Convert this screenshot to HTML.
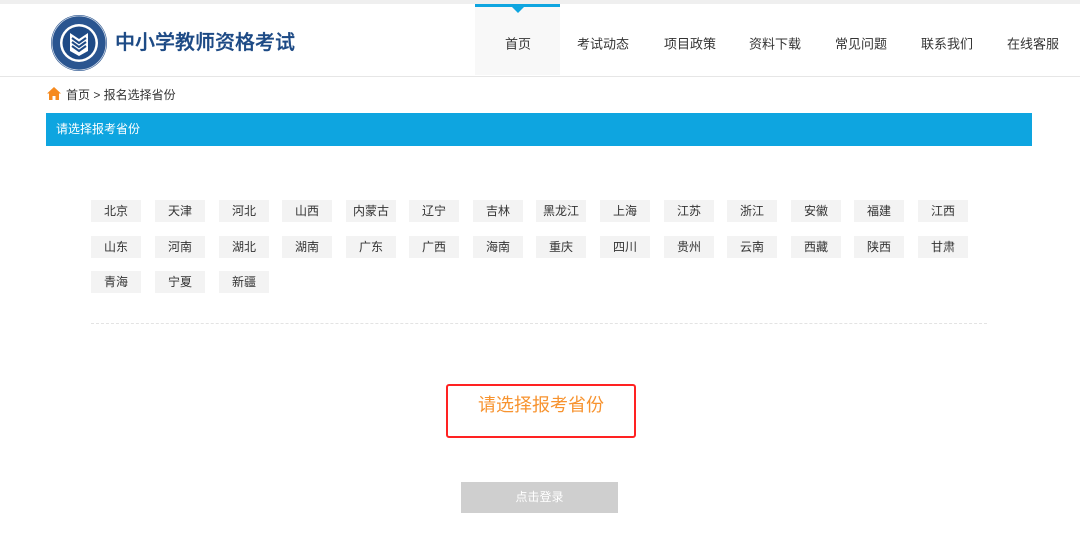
<!DOCTYPE html>
<html><head><meta charset="utf-8"><style>
*{margin:0;padding:0;box-sizing:border-box}
body{width:1080px;height:552px;overflow:hidden;background:#fff;font-family:"Liberation Sans","Noto Sans CJK SC",sans-serif;position:relative;color:#333}
.a{position:absolute}
.nav{position:absolute;top:43px;font-size:13px;color:#333;transform:translate(-50%,-50%);white-space:nowrap}
.p{position:absolute;width:50px;height:22px;background:#f3f3f3;font-size:12px;color:#333;text-align:center;line-height:22px}
</style></head><body>
<div class="a" style="left:0;top:0;width:1080px;height:4px;background:#efefef"></div>
<div class="a" style="left:0;top:76px;width:1080px;height:1px;background:#e6e6e6"></div>
<div class="a" style="left:475px;top:4px;width:85px;height:71px;background:#f8f8f8"></div>
<div class="a" style="left:475px;top:4px;width:85px;height:3px;background:#0ea5e0"></div>
<div class="a" style="left:512px;top:7px;width:0;height:0;border-left:6px solid transparent;border-right:6px solid transparent;border-top:6px solid #0ea5e0"></div>
<svg class="a" style="left:50px;top:14px" width="58" height="58" viewBox="0 0 58 58">
<circle cx="29" cy="29" r="28" fill="#2a5590"/>
<circle cx="29" cy="29" r="27" fill="none" stroke="#cfd8e6" stroke-width="0.8"/>
<circle cx="29" cy="29" r="19" fill="#fff"/>
<circle cx="29" cy="29" r="16.5" fill="#1e4a86"/>
<path d="M20 19 L29 25 L38 19 L38 37 L29 42 L20 37 Z" fill="#fff"/>
<path d="M22 24 L29 29 L36 24 M22 28 L29 33 L36 28 M22 32 L29 37 L36 32" stroke="#1e4a86" stroke-width="2" fill="none"/>
</svg>
<div class="a" style="left:115px;top:30px;font-size:20px;color:#1d4a85;line-height:26px;font-weight:500;-webkit-text-stroke:0.3px #1d4a85">中小学教师资格考试</div>
<div class="nav" style="left:518px">首页</div>
<div class="nav" style="left:603px">考试动态</div>
<div class="nav" style="left:690px">项目政策</div>
<div class="nav" style="left:775px">资料下载</div>
<div class="nav" style="left:861px">常见问题</div>
<div class="nav" style="left:947px">联系我们</div>
<div class="nav" style="left:1033px">在线客服</div>
<svg class="a" style="left:47px;top:87px" width="14" height="13" viewBox="0 0 14 13"><path d="M7 0 L14 6.5 L12 6.5 L12 13 L8.5 13 L8.5 9 L5.5 9 L5.5 13 L2 13 L2 6.5 L0 6.5 Z" fill="#f68a1e"/></svg>
<div class="a" style="left:66px;top:87px;font-size:12px;color:#333;line-height:16px">首页 &gt; 报名选择省份</div>
<div class="a" style="left:46px;top:113px;width:986px;height:33px;background:#0ea5e0;color:#fff;font-size:12px;line-height:33px;padding-left:10px">请选择报考省份</div>
<div class="p" style="left:91px;top:200px">北京</div><div class="p" style="left:155px;top:200px">天津</div><div class="p" style="left:219px;top:200px">河北</div><div class="p" style="left:282px;top:200px">山西</div><div class="p" style="left:346px;top:200px">内蒙古</div><div class="p" style="left:409px;top:200px">辽宁</div><div class="p" style="left:473px;top:200px">吉林</div><div class="p" style="left:536px;top:200px">黑龙江</div><div class="p" style="left:600px;top:200px">上海</div><div class="p" style="left:664px;top:200px">江苏</div><div class="p" style="left:727px;top:200px">浙江</div><div class="p" style="left:791px;top:200px">安徽</div><div class="p" style="left:854px;top:200px">福建</div><div class="p" style="left:918px;top:200px">江西</div>
<div class="p" style="left:91px;top:236px">山东</div><div class="p" style="left:155px;top:236px">河南</div><div class="p" style="left:219px;top:236px">湖北</div><div class="p" style="left:282px;top:236px">湖南</div><div class="p" style="left:346px;top:236px">广东</div><div class="p" style="left:409px;top:236px">广西</div><div class="p" style="left:473px;top:236px">海南</div><div class="p" style="left:536px;top:236px">重庆</div><div class="p" style="left:600px;top:236px">四川</div><div class="p" style="left:664px;top:236px">贵州</div><div class="p" style="left:727px;top:236px">云南</div><div class="p" style="left:791px;top:236px">西藏</div><div class="p" style="left:854px;top:236px">陕西</div><div class="p" style="left:918px;top:236px">甘肃</div>
<div class="p" style="left:91px;top:271px">青海</div><div class="p" style="left:155px;top:271px">宁夏</div><div class="p" style="left:219px;top:271px">新疆</div>
<div class="a" style="left:91px;top:323px;width:896px;height:0;border-top:1px dashed #e3e3e3"></div>
<div class="a" style="left:446px;top:384px;width:190px;height:54px;border:2px solid #f22;border-radius:3px"></div>
<div class="a" style="left:446px;top:392px;width:190px;text-align:center;font-size:18px;color:#f7932f;line-height:26px">请选择报考省份</div>
<div class="a" style="left:461px;top:482px;width:157px;height:31px;background:#cfcfcf;color:#fff;font-size:12px;text-align:center;line-height:31px">点击登录</div>
</body></html>
